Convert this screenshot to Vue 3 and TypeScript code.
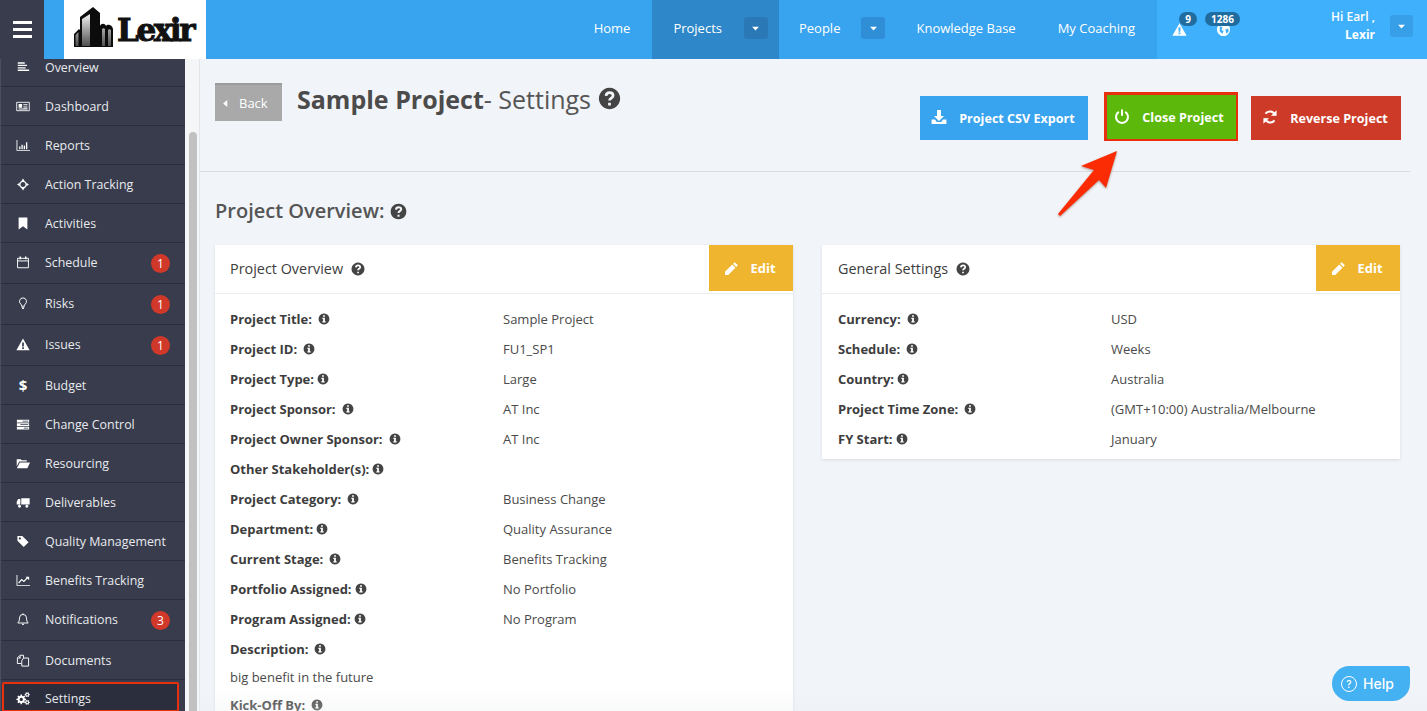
<script setup lang="ts">
import { h } from 'vue'

interface IconDef { f?: string; s?: string; c?: string; w?: number }

function gear(cx: number, cy: number, r: number, hole: number, teeth: number): string {
  const pts: string[] = []
  const step = (Math.PI * 2) / teeth
  for (let i = 0; i < teeth; i++) {
    const a = i * step
    const list: [number, number][] = [
      [a - step * 0.3, r * 0.74],
      [a - step * 0.17, r],
      [a + step * 0.17, r],
      [a + step * 0.3, r * 0.74]
    ]
    for (const [ang, rad] of list) {
      pts.push(`${(cx + Math.cos(ang) * rad).toFixed(2)} ${(cy + Math.sin(ang) * rad).toFixed(2)}`)
    }
  }
  const ring = `M${pts.join('L')}z`
  const holePath = `M${cx - hole} ${cy}a${hole} ${hole} 0 1 0 ${hole * 2} 0a${hole} ${hole} 0 1 0 ${-hole * 2} 0z`
  return ring + holePath
}

const icons: Record<string, IconDef> = {
  overview: { f: 'M2 2h8v1.600H2zM2 4.800h10.500v1.600H2zM2 7.600h9v1.600H2zM2 10.400h13v1.600H2z' },
  dashboard: { s: 'M.8 3.200h14.400v9.600H.8z', f: 'M3 5h4v4.400H3zM8.400 5h4.800v1H8.400zM8.400 7h4.800v1H8.400zM8.400 9h4.800v1H8.400zM3 10.400h10.200v1H3z', w: 1 },
  reports: { f: 'M.6 1.800h1v11.200h14.600v1H.6zM3.600 9h1.500v3.200H3.600zM6.200 7h1.500v5.200H6.200zM8.800 8h1.500v4.200H8.800zM11.400 4.400h1.500v7.800h-1.500z' },
  crosshair: { s: 'M8 4.400a3.600 3.600 0 1 1-.01 0z', f: 'M8 1.200l2 3H6zM8 14.800l-2-3h4zM1.200 8l3-2v4zM14.800 8l-3 2V6z', w: 1.4 },
  bookmark: { f: 'M3 1.200h10v13.600l-5-3.600-5 3.600z' },
  calendar: { s: 'M1.800 3.200h12.400v10.800H1.800zM1.800 6.200h12.400', f: 'M4 1.200h1.800v3H4zM10.200 1.200H12v3h-1.800z', w: 1.1 },
  bulb: { s: 'M8 1.600a4 4 0 0 0-2.400 7.200c.6.5.8 1.400.8 2.200h3.200c0-.8.2-1.700.8-2.200A4 4 0 0 0 8 1.600z', f: 'M6.400 11.600h3.200v1.200H6.400zM7 13.200h2v1.200H7z', w: 1.1 },
  warning: { f: 'M8 1.200l7.600 13.400H.4zM7 5.600v4.800h2V5.600zM7 11.200v1.900h2v-1.900z' },
  server: { f: 'M1 2.600h14v3H1zM1 6.600h14v3H1zM1 10.600h14v3H1zM7.500 3.600v1H14v-1zM5 7.600v1h9v-1zM9 11.600v1h5v-1z' },
  folder: { f: 'M.8 3h4.600l1.300 1.400h5.600v1.400H3.800L.8 11zM4.400 6.800H16l-3 6.600H1z' },
  truck: { f: 'M6 3h9.600v7.400H6zM.8 7l1.600-3H5v6.400H.8zM4 10.600a1.700 1.700 0 1 0 .01 0zM12.400 10.600a1.700 1.700 0 1 0 .01 0z' },
  tag: { f: 'M1.600 1.600h5.600l7.200 7.200-5.600 5.600-7.200-7.200zM4.400 3.200a1.200 1.200 0 1 0 .01 0z' },
  line: { f: 'M.6 1.800h1v11.200h14.600v1H.6zM11 3.600h4v4z', s: 'M3 11l3.400-4 2.600 2 4.400-4.600', w: 1.4 },
  bell: { s: 'M8 2.200a4 4 0 0 0-4 4c0 3.400-1 4.800-2 5.800h12c-1-1-2-2.400-2-5.800a4 4 0 0 0-4-4z', f: 'M6.600 12.800h2.800a1.400 1.400 0 0 1-2.800 0zM7.300 1h1.400v1.300H7.300z', w: 1.1 },
  files: { s: 'M6 11.400H1.600V5l3-3h4v3M8.600 5.200h5.800v9.200H6.600V8.200l2-3z', f: 'M5.200 2.400v3.200H2.200z', w: 1.1 },
  cogs: { f: gear(6, 9, 5.6, 1.9, 8) + gear(12.8, 3.6, 3, 1, 6) + gear(12.8, 12.4, 3, 1, 6) },
  globe: { f: 'M8 1a7 7 0 1 0 .01 0zM4 4.500l3 1-1 3 2 1-1 3-3-2.500zM10 8l3-1 .5 3-2.500 2.500z' },
  download: { f: 'M6 1h4v6h3l-5 5-5-5h3zM.6 10.600H4l1.800 2.400h4.400l1.800-2.400h3.400V15H.6z' },
  power: { s: 'M4.800 3.800a6 6 0 1 0 6.400 0M8 1.400v6.400', w: 2 },
  refresh: { s: 'M13 6.400A5.400 5.400 0 0 0 3.500 4.600M3 9.600a5.400 5.400 0 0 0 9.500 1.800', f: 'M14.600 1.200v5.600H9zM1.400 14.800V9.200H7z', w: 2 },
  pencil: { f: 'M11.400 1.200l3.400 3.400-1.700 1.700-3.400-3.400zM8.800 3.800l3.400 3.400-7.700 7.700H1.100v-3.400z' },
  caret: { f: 'M3 5.500h10L8 11z' },
  caretLeft: { f: 'M10.500 3v10L4.500 8z' },
  question: { f: 'M8 .6a7.400 7.400 0 1 0 .01 0z', c: 'M5.600 6.200c.1-1.500 1.100-2.300 2.500-2.300 1.400 0 2.400.8 2.400 2 0 1.800-2.500 1.800-2.500 3.500M8 11v1.900', w: 1.9 },
  info: { f: 'M8 .8a7.200 7.200 0 1 0 .01 0zM6.800 3v2h2.400V3zM5.800 6.400v1.500h1v3.200h-1v1.600h4.400v-1.600h-1V6.400z' }
}

const Ic = (p: { name: string }) => {
  const d = icons[p.name]
  const kids = []
  if (d.f) kids.push(h('path', { d: d.f, fill: 'currentColor', 'fill-rule': 'evenodd' }))
  if (d.s) kids.push(h('path', { d: d.s, fill: 'none', stroke: 'currentColor', 'stroke-width': d.w ?? 1.2 }))
  if (d.c) kids.push(h('path', { d: d.c, fill: 'none', stroke: 'var(--cut, #fff)', 'stroke-width': d.w ?? 1.2 }))
  return h('svg', { viewBox: '0 0 16 16', 'aria-hidden': 'true' }, kids)
}

interface NavItem { label: string; icon?: string; glyph?: string; badge?: number; active?: boolean }
const sideItems: NavItem[] = [
  { label: 'Overview', icon: 'overview' },
  { label: 'Dashboard', icon: 'dashboard' },
  { label: 'Reports', icon: 'reports' },
  { label: 'Action Tracking', icon: 'crosshair' },
  { label: 'Activities', icon: 'bookmark' },
  { label: 'Schedule', icon: 'calendar', badge: 1 },
  { label: 'Risks', icon: 'bulb', badge: 1 },
  { label: 'Issues', icon: 'warning', badge: 1 },
  { label: 'Budget', glyph: '$' },
  { label: 'Change Control', icon: 'server' },
  { label: 'Resourcing', icon: 'folder' },
  { label: 'Deliverables', icon: 'truck' },
  { label: 'Quality Management', icon: 'tag' },
  { label: 'Benefits Tracking', icon: 'line' },
  { label: 'Notifications', icon: 'bell', badge: 3 },
  { label: 'Documents', icon: 'files' },
  { label: 'Settings', icon: 'cogs', active: true }
]

interface Row { label: string; value?: string; tight?: boolean }
const overviewRows: Row[] = [
  { label: 'Project Title:', value: 'Sample Project' },
  { label: 'Project ID:', value: 'FU1_SP1' },
  { label: 'Project Type:', value: 'Large', tight: true },
  { label: 'Project Sponsor:', value: 'AT Inc' },
  { label: 'Project Owner Sponsor:', value: 'AT Inc' },
  { label: 'Other Stakeholder(s):', tight: true },
  { label: 'Project Category:', value: 'Business Change' },
  { label: 'Department:', value: 'Quality Assurance', tight: true },
  { label: 'Current Stage:', value: 'Benefits Tracking' },
  { label: 'Portfolio Assigned:', value: 'No Portfolio', tight: true },
  { label: 'Program Assigned:', value: 'No Program', tight: true },
  { label: 'Description:' }
]
const generalRows: Row[] = [
  { label: 'Currency:', value: 'USD' },
  { label: 'Schedule:', value: 'Weeks' },
  { label: 'Country:', value: 'Australia', tight: true },
  { label: 'Project Time Zone:', value: '(GMT+10:00) Australia/Melbourne' },
  { label: 'FY Start:', value: 'January', tight: true }
]
</script>

<template>
  <div class="app">
    <header class="top">
      <div class="burger"><span></span><span></span><span></span></div>
      <div class="logo">
        <svg class="logo-mark" viewBox="0 0 40 40" aria-hidden="true">
          <defs>
            <linearGradient id="lg" x1="0" y1="0" x2="0" y2="1">
              <stop offset="0" stop-color="#f2f2f2" />
              <stop offset="1" stop-color="#4f4f4f" />
            </linearGradient>
          </defs>
          <path d="M0 27l5-5 1 1V10L19 0l7 6v13c1-3 5-3 6 0 1-2 6-2 7 3V40H0z" fill="#0c0c0c" />
          <path d="M8 12l8-5V39H8zM1.500 28l3-3v14h-3zM28 22c1-1 2-1 3 0V39h-3zM34 23c1-1 2-1 3 0V39h-3z" fill="url(#lg)" />
        </svg>
        <span class="logo-text">Lexir</span>
      </div>
      <nav class="nav">
        <a class="nav-item">Home</a>
        <a class="nav-item has-drop active">Projects<span class="drop"><Ic name="caret" /></span></a>
        <a class="nav-item has-drop people">People<span class="drop"><Ic name="caret" /></span></a>
        <a class="nav-item">Knowledge Base</a>
        <a class="nav-item">My Coaching</a>
      </nav>
      <div class="user">
        <span class="alert"><Ic name="warning" /><b class="pill pill-a">9</b></span>
        <span class="alert alert-b"><Ic name="globe" /><b class="pill pill-b">1286</b></span>
        <div class="who"><span>Hi Earl ,</span><span class="who-name">Lexir</span></div>
        <span class="drop user-drop"><Ic name="caret" /></span>
      </div>
    </header>

    <div class="body">
      <aside class="side">
        <ul class="side-list">
          <li v-for="item in sideItems" :key="item.label" class="side-row" :class="{ tall: item.badge, current: item.active }">
            <span class="side-ic">
              <Ic v-if="item.icon" :name="item.icon" />
              <span v-else class="glyph">{{ item.glyph }}</span>
            </span>
            <span class="side-label">{{ item.label }}</span>
            <span v-if="item.badge" class="count">{{ item.badge }}</span>
          </li>
        </ul>
      </aside>
      <div class="track"><div class="thumb"></div></div>

      <main class="main">
        <section class="head">
          <button class="back"><Ic name="caretLeft" />Back</button>
          <h1 class="title"><b>Sample Project</b>- Settings <span class="q-big"><Ic name="question" /></span></h1>
          <div class="actions">
            <button class="act blue"><Ic name="download" />Project CSV Export</button>
            <button class="act green"><Ic name="power" />Close Project</button>
            <button class="act red"><Ic name="refresh" />Reverse Project</button>
          </div>
        </section>

        <h2 class="sub">Project Overview: <span class="q-mid"><Ic name="question" /></span></h2>

        <div class="cards">
          <article class="card">
            <div class="card-head">
              <span class="card-title">Project Overview<span class="q-small"><Ic name="question" /></span></span>
              <button class="edit"><Ic name="pencil" />Edit</button>
            </div>
            <div class="card-body">
              <div v-for="r in overviewRows" :key="r.label" class="row">
                <span class="lab">{{ r.label }}<span class="i" :class="{ tight: r.tight }"><Ic name="info" /></span></span>
                <span class="val">{{ r.value }}</span>
              </div>
              <p class="desc">big benefit in the future</p>
              <div class="row">
                <span class="lab">Kick-Off By:<span class="i"><Ic name="info" /></span></span>
              </div>
            </div>
          </article>

          <article class="card card-short">
            <div class="card-head">
              <span class="card-title">General Settings<span class="q-small"><Ic name="question" /></span></span>
              <button class="edit"><Ic name="pencil" />Edit</button>
            </div>
            <div class="card-body short">
              <div v-for="r in generalRows" :key="r.label" class="row">
                <span class="lab">{{ r.label }}<span class="i" :class="{ tight: r.tight }"><Ic name="info" /></span></span>
                <span class="val">{{ r.value }}</span>
              </div>
            </div>
          </article>
        </div>
      </main>
    </div>

    <svg class="arrow" viewBox="0 0 80 80" aria-hidden="true">
      <path d="M67 3L31 18 44 22 8 66l2 2L49 32 56 40z" fill="#fb2c04" filter="drop-shadow(0 1px 1px rgba(90,20,0,.45))" />
    </svg>
    <div class="fade"></div>
    <button class="help"><span class="help-q">?</span>Help</button>
  </div>
</template>

<style>
html, body { margin: 0; padding: 0; overflow: hidden; }
</style>

<style scoped>
.app {
  position: relative;
  width: 1427px;
  height: 711px;
  overflow: hidden;
  display: flex;
  flex-direction: column;
  font-family: "Open Sans", "Liberation Sans", sans-serif;
  font-size: 13px;
  color: #444;
  background: #f1f4f8;
}
svg { display: block; }
button { font-family: inherit; border: 0; cursor: pointer; }

/* top bar */
.top { height: 59px; flex: none; display: flex; background: #38a3ee; }
.burger {
  width: 44px;
  background: #383c4c;
  display: flex;
  flex-direction: column;
  justify-content: center;
  gap: 4px;
  padding-left: 13px;
  box-sizing: border-box;
}
.burger span { display: block; width: 19px; height: 3px; background: #fff; }
.logo {
  margin-left: 20px;
  width: 142px;
  background: #fff;
  display: flex;
  align-items: center;
  padding-left: 10px;
  box-sizing: border-box;
}
.logo-mark { width: 40px; height: 40px; margin-top: -5px; flex: none; }
.logo-text {
  font-family: "DejaVu Serif", "Liberation Serif", serif;
  font-weight: 700;
  font-size: 31px;
  letter-spacing: -2.400px;
  line-height: 1;
  color: #111;
  -webkit-text-stroke: 1px #111;
  margin: 2px 0 0 3px;
}
.nav { margin-left: auto; display: flex; }
.nav-item {
  display: flex;
  align-items: center;
  padding: 0 22px 3px 20px;
  color: #fff;
  font-weight: 500;
  white-space: nowrap;
}
.nav-item.has-drop { padding-right: 11px; padding-left: 21px; }
.nav-item.active { background: #2e87c8; }
.nav-item.people { padding-left: 20px; }
.drop {
  width: 24px;
  height: 22px;
  margin-left: 22px;
  border-radius: 3px;
  background: #2f8ed6;
  color: #fff;
  display: flex;
  align-items: center;
  justify-content: center;
}
.people .drop { margin-left: 21px; }
.active .drop { background: #2a79b6; }
.drop svg { width: 11px; height: 11px; }
.user {
  width: 270px;
  flex: none;
  background: #3fb0fb;
  display: flex;
  align-items: center;
  color: #fff;
}
.alert { position: relative; width: 15px; height: 15px; margin-left: 15px; }
.alert svg { width: 15px; height: 15px; }
.alert-b { margin-left: 29px; }
.pill {
  position: absolute;
  top: -10px;
  height: 14px;
  border-radius: 7px;
  background: #216c9f;
  color: #fff;
  font-size: 10px;
  line-height: 14px;
  font-weight: 700;
  text-align: center;
}
.pill-a { left: 7px; width: 18px; }
.pill-b { left: -11px; width: 35px; }
.who {
  margin-left: auto;
  padding-bottom: 7px;
  display: flex;
  flex-direction: column;
  align-items: flex-end;
  line-height: 18px;
  font-size: 12px;
  font-weight: 600;
}
.who-name { font-weight: 700; }
.user-drop { margin: -7px 14px 0 15px; width: 23px; background: #379fe8; }

/* sidebar */
.body { flex: 1; display: flex; min-height: 0; }
.side { width: 185px; flex: none; background: #383c4c; overflow: hidden; border-left: 1px solid #4a4e5e; box-sizing: border-box; }
.side-list { list-style: none; margin: -11px 0 0; padding: 0; }
.side-row {
  height: 39px;
  box-sizing: border-box;
  border-bottom: 1px solid #2b2e3c;
  display: flex;
  align-items: center;
  color: #e8eaee;
  font-size: 12.400px;
  padding-left: 15px;
}
.side-row.tall { height: 41px; padding-bottom: 2px; }
.side-row.tall .count { margin-top: 2px; }
.side-row.current {
  height: 30px;
  margin: 2px 6px 0 1px;
  padding: 2px 0 0 12px;
  background: #2b2e3d;
  border: 2px solid #e8300f;
  border-radius: 2px;
}
.side-ic { width: 14px; height: 14px; margin-right: 15px; display: flex; align-items: center; justify-content: center; color: #fff; flex: none; }
.side-ic svg { width: 15px; height: 15px; }
.glyph { font-weight: 700; font-size: 15px; line-height: 1; }
.side-label { white-space: nowrap; }
.count {
  margin-left: auto;
  margin-right: 15px;
  width: 19px;
  height: 19px;
  border-radius: 50%;
  background: #d0392a;
  color: #fff;
  font-size: 12px;
  line-height: 19px;
  text-align: center;
}
.track { width: 14px; flex: none; background: #f4f6f8; padding-left: 4px; box-sizing: border-box; }
.thumb { width: 8px; height: 100%; margin-top: 73px; background: #c1c1c1; border-radius: 4px 4px 0 0; }

/* main */
.main { flex: 1; min-width: 0; border-left: 1px solid #e2e5ea; }
.head {
  height: 113px;
  box-sizing: border-box;
  margin-right: 17px;
  border-bottom: 1px solid #d8dce1;
  display: flex;
  align-items: flex-start;
  padding-left: 15px;
}
.back {
  margin-top: 24px;
  width: 67px;
  height: 38px;
  background: #a9a9a9;
  border-top: 2px solid #9c9c9c;
  color: #fff;
  font-size: 13px;
  display: flex;
  align-items: center;
  padding: 0 0 0 5px;
}
.back svg { width: 11px; height: 11px; margin-right: 8px; }
.title { margin: 22px 0 0 15px; font-size: 25px; line-height: 36px; font-weight: 400; color: #555; display: flex; white-space: pre; }
.title b { font-weight: 700; color: #4b4b4b; }
.q-big { --cut: #f1f4f8; width: 23px; height: 23px; margin: 6px 0 0 0; color: #444; }
.actions { margin-left: auto; margin-right: 9px; display: flex; align-items: flex-start; }
.act {
  height: 44px;
  margin-top: 37px;
  color: #fff;
  font-size: 12.600px;
  font-weight: 700;
  display: flex;
  align-items: center;
  justify-content: center;
  white-space: nowrap;
  box-sizing: border-box;
  padding: 0 2px 0 0;
}
.act svg { width: 16px; height: 16px; margin-right: 12px; margin-top: -2px; }
.blue { width: 168px; background: #38a3ee; }
.green {
  width: 134px;
  height: 49px;
  margin: 33px 0 0 16px;
  padding-right: 5px;
  background: #5cb90c;
  border-style: solid;
  border-color: #e8300f;
  border-width: 3px 2px 2px 3px;
}
.red { width: 150px; margin-left: 13px; background: #cd3b28; }

.sub { margin: 27px 0 22px 15px; font-size: 20px; line-height: 24px; font-weight: 600; color: #555; display: flex; align-items: center; white-space: pre; }
.q-mid { --cut: #f1f4f8; width: 17px; height: 17px; color: #444; }
.cards { margin: 0 27px 0 15px; display: grid; grid-template-columns: 578px 578px; column-gap: 29px; align-items: start; }
.card { background: #fff; box-shadow: 0 1px 3px rgba(0, 0, 0, .1); position: relative; }
.card-head {
  height: 49px;
  box-sizing: border-box;
  border-bottom: 1px solid #ebedf0;
  display: flex;
  align-items: flex-start;
  justify-content: space-between;
  padding-left: 15px;
}
.card-short .card-head, .card-short .card-body { padding-left: 16px; }
.card-title { font-size: 14.400px; font-weight: 500; line-height: 47px; color: #3d3d3d; display: flex; align-items: center; }
.q-small { --cut: #fff; width: 14px; height: 14px; margin-left: 8px; color: #444; }
.edit {
  width: 84px;
  height: 46px;
  background: #f0b52f;
  color: #fff;
  font-size: 13px;
  font-weight: 700;
  display: flex;
  align-items: center;
  justify-content: center;
  padding: 0 2px 0 0;
}
.edit svg { width: 15px; height: 15px; margin-right: 11px; }
.card-body { padding: 10px 15px 0; }
.card-body.short { padding-bottom: 5px; }
.row { display: grid; grid-template-columns: 273px 1fr; height: 30px; align-items: center; }
.lab { font-weight: 700; font-size: 13px; color: #3d3d3d; display: flex; align-items: center; white-space: nowrap; }
.val { color: #4a4a4a; white-space: nowrap; }
.i { width: 12px; height: 12px; margin-left: 6px; color: #444; }
.i.tight { margin-left: 3px; }
.i svg, .q-big svg, .q-mid svg, .q-small svg { width: 100%; height: 100%; }
.desc { margin: 0; height: 26px; line-height: 26px; color: #4a4a4a; }

/* overlays */
.arrow { position: absolute; left: 1050px; top: 148px; width: 80px; height: 80px; }
.fade {
  position: absolute;
  left: 199px;
  right: 0;
  bottom: 0;
  height: 26px;
  background: linear-gradient(rgba(236, 238, 241, 0), rgba(236, 238, 241, .3));
}
.help {
  position: absolute;
  right: 17px;
  bottom: 10px;
  width: 78px;
  height: 35px;
  border-radius: 18px 3px 18px 18px;
  background: #44b1f2;
  color: #fff;
  font-family: Inter, Roboto, sans-serif;
  font-size: 14px;
  font-weight: 500;
  display: flex;
  align-items: center;
  padding: 0 0 0 9px;
  box-sizing: border-box;
}
.help-q {
  width: 14px;
  height: 14px;
  border: 1px solid #fff;
  border-radius: 50%;
  font-size: 10px;
  line-height: 14px;
  text-align: center;
  margin-right: 6px;
}
</style>
